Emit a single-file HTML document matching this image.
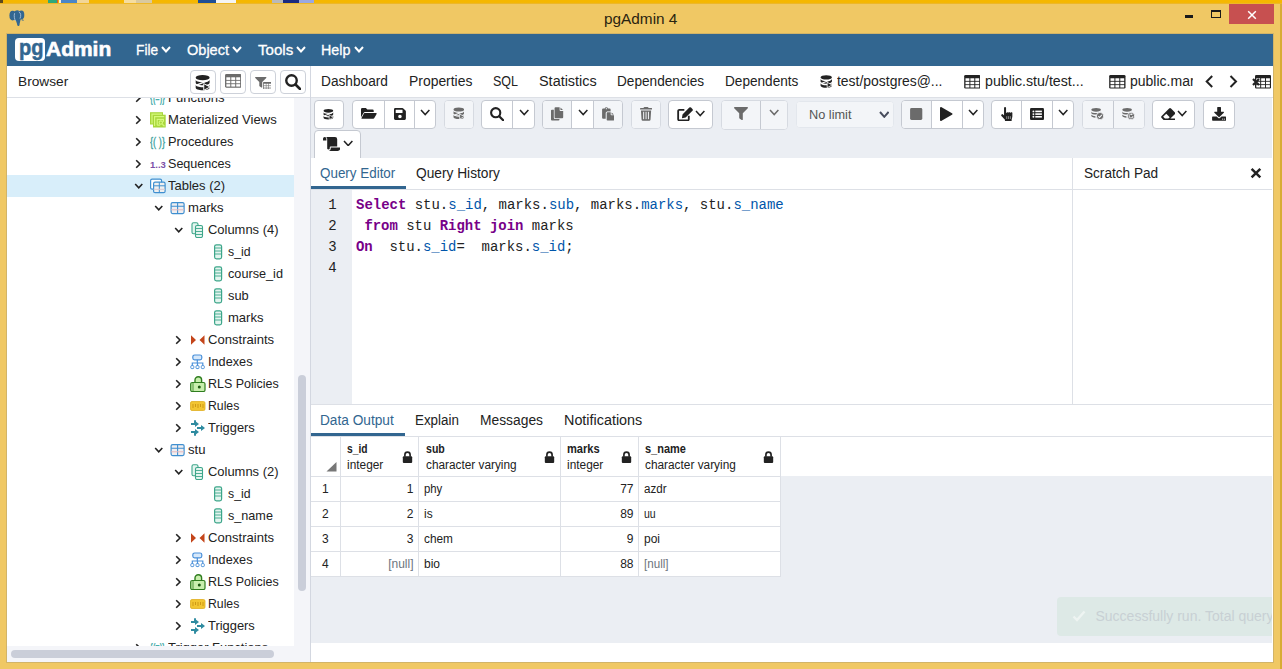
<!DOCTYPE html>
<html><head><meta charset="utf-8"><title>pgAdmin 4</title>
<style>
*{box-sizing:border-box;margin:0;padding:0}
html,body{width:1282px;height:669px;overflow:hidden}
body{background:#F0C864;font-family:"Liberation Sans",Arial,sans-serif;font-size:14px;color:#222;position:relative}
div,span,svg{position:absolute}
span{white-space:nowrap}
.f{transform-origin:0 0}
#topstrip{left:0;top:0;width:1282px;height:4px;background:linear-gradient(#F5B700 0,#F5B700 60%,#E9B73A 100%)}
#app{left:7px;top:34px;width:1266px;height:628px;background:#fff}
#menubar{left:7px;top:34px;width:1266px;height:32px;background:#326690}
.menu{color:#fff;font-size:15px;line-height:20px;-webkit-text-stroke:0.3px #fff}
.tab{font-size:14px;line-height:20px;color:#222}
.tr{line-height:22px;height:22px;font-size:13px;color:#222}
.btn{height:29px;top:100px;background:#fff;border:1px solid #DDE0E6;border-radius:4px}
.btn.dis{background:#F1F3F6}
.btn i{position:absolute;top:0;width:1px;height:27px;background:#C5C9D1}
.sb{width:26px;height:24px;top:70px;background:#fff;border:1px solid #CDD1D9;border-radius:4px}
.code{font-family:"Liberation Mono","DejaVu Sans Mono",monospace;font-size:14px;line-height:21px;color:#222;white-space:pre}
.kw{position:static;color:#708;font-weight:bold}
.pr{position:static;color:#05a}
.ln{font-family:"Liberation Mono","DejaVu Sans Mono",monospace;font-size:14px;line-height:21px;color:#222}
.gh{font-size:12px;line-height:16px;color:#222}
.gc{font-size:12px;line-height:25px;color:#222}
</style></head><body>
<div id="topstrip"></div>
<div style="left:0px;top:0;width:3.0px;height:3px;background:#5E4A1E"></div><div style="left:47.6px;top:0;width:9.0px;height:3px;background:#2FA87A"></div><div style="left:56.6px;top:0;width:1.9px;height:3px;background:#D2553C"></div><div style="left:58.5px;top:0;width:2.0px;height:3px;background:#F4EDE4"></div><div style="left:60.5px;top:0;width:16.2px;height:3px;background:#4A86C8"></div><div style="left:76.7px;top:0;width:12.1px;height:3px;background:#F2D698"></div><div style="left:124px;top:0;width:12.0px;height:3px;background:#F5DDA0"></div><div style="left:136px;top:0;width:16.0px;height:3px;background:#D9C9A0"></div><div style="left:197.7px;top:0;width:18.0px;height:3px;background:#1F4E96"></div><div style="left:215.7px;top:0;width:20.6px;height:3px;background:#F4F4F4"></div><div style="left:271.5px;top:0;width:11.5px;height:3px;background:#B9B9B9"></div><div style="left:283px;top:0;width:15.6px;height:3px;background:#1A2A80"></div><div style="left:298.6px;top:0;width:15.4px;height:3px;background:#9AA8E0"></div>
<svg style="left:9.4px;top:9.9px" width="15.6" height="16" viewBox="0 0 15.6 16"><g fill="#336791"><ellipse cx="3.6" cy="5.6" rx="3.2" ry="4.8"/><ellipse cx="8.2" cy="5.6" rx="4.4" ry="5.4"/><ellipse cx="12.4" cy="5" rx="2.9" ry="4.4"/><path d="M6.4 8C6.8 11 8 13 8.300 15.200C8.500 16.300 10.400 16.200 10.500 15C10.700 12.500 11.500 10.500 12 8z"/><path d="M13 9.300l1.800 .6-.4 .8-1.800-.5z"/></g><path d="M5.600 3.200C4.800 6 5.400 9 6.600 11M9.800 1.800C12 2.800 12.200 6 11 8.600" stroke="#B7CDE6" stroke-width=".8" fill="none"/></svg>
<span class="f" style="left:603.7px;top:8.5px;transform:scaleX(0.9904);font-size:15.5px;line-height:20px;color:#2a2410">pgAdmin 4</span><div style="left:1185px;top:15px;width:8px;height:3px;background:#1a1a1a"></div>
<div style="left:1211px;top:10px;width:10px;height:8px;border:1px solid #1a1a1a;border-top-width:2px"></div>
<div style="left:1229px;top:4px;width:45px;height:20px;background:#C75050"></div>
<svg style="left:1247px;top:9.5px" width="10" height="10" viewBox="0 0 10 10"><path d="M1.2 1.2L8.8 8.8M8.8 1.2L1.2 8.8" stroke="#fff" stroke-width="1.5" fill="none"/></svg>
<div id="app"></div>
<div id="menubar"></div>
<div style="left:15px;top:38px;width:30px;height:23px;background:#fff;border-radius:4px"></div>
<span class="f" style="left:18.5px;top:36px;transform:scaleX(0.9111);font-size:22px;line-height:24px;font-weight:bold;color:#326690;-webkit-text-stroke:0.5px #326690">pg</span><span class="f" style="left:45.5px;top:37px;transform:scaleX(1.0479);font-size:20px;line-height:24px;font-weight:bold;color:#fff;-webkit-text-stroke:0.6px #fff">Admin</span><span class="f menu" style="left:135.8px;top:40px;transform:scaleX(0.9143);">File</span><svg style="left:161.2px;top:46px" width="10" height="7" viewBox="-1 -1 10 7"><path d="M0 0L4.0 4.5L8 0" stroke="#fff" stroke-width="2" fill="none"/></svg>
<span class="f menu" style="left:186.9px;top:40px;transform:scaleX(0.9686);">Object</span><svg style="left:232.2px;top:46px" width="10" height="7" viewBox="-1 -1 10 7"><path d="M0 0L4.0 4.5L8 0" stroke="#fff" stroke-width="2" fill="none"/></svg>
<span class="f menu" style="left:257.5px;top:40px;transform:scaleX(1.0077);">Tools</span><svg style="left:296.1px;top:46px" width="10" height="7" viewBox="-1 -1 10 7"><path d="M0 0L4.0 4.5L8 0" stroke="#fff" stroke-width="2" fill="none"/></svg>
<span class="f menu" style="left:321.4px;top:40px;transform:scaleX(0.9527);">Help</span><svg style="left:354.3px;top:46px" width="10" height="7" viewBox="-1 -1 10 7"><path d="M0 0L4.0 4.5L8 0" stroke="#fff" stroke-width="2" fill="none"/></svg>
<span class="f" style="left:17.6px;top:72px;transform:scaleX(1.0527);font-size:13px;line-height:20px">Browser</span><div class="sb" style="left:190px"></div>
<div class="sb" style="left:220px"></div>
<div class="sb" style="left:250px"></div>
<div class="sb" style="left:280px"></div>
<svg style="left:195px;top:75px" width="15.3" height="15.6" viewBox="0 0 11 11.2"><g fill="#222"><ellipse cx="5.5" cy="1.9" rx="5" ry="1.9"/><path d="M.5 3.4c0 1 2.2 1.8 5 1.8s5-.8 5-1.8v2.2c0 1-2.2 1.8-5 1.8s-5-.8-5-1.8z"/><path d="M.5 7c0 1 2.2 1.8 5 1.8s5-.8 5-1.8v2.2c0 1-2.2 1.8-5 1.8s-5-.8-5-1.8z"/></g><path d="M1 7.3L9 4.2" stroke="#fff" stroke-width="1.1"/><path d="M6.3 6.2L10.8 8.6L6.3 11z" fill="#222" stroke="#fff" stroke-width=".7"/></svg><svg style="left:224.6px;top:74.2px" width="16.5" height="13.7" viewBox="0 0 15 12.5"><rect x="0" y="0" width="15" height="12.500" rx="1.200" fill="#6b6b6b"/><g fill="#fff"><rect x="1.200" y="3" width="3.600" height="2.400"/><rect x="5.700" y="3" width="3.600" height="2.400"/><rect x="10.200" y="3" width="3.600" height="2.400"/><rect x="1.200" y="6.200" width="3.600" height="2.300"/><rect x="5.700" y="6.200" width="3.600" height="2.300"/><rect x="10.200" y="6.200" width="3.600" height="2.300"/><rect x="1.200" y="9.300" width="3.600" height="2.200"/><rect x="5.700" y="9.300" width="3.600" height="2.200"/><rect x="10.200" y="9.300" width="3.600" height="2.200"/></g></svg><svg style="left:255px;top:77px" width="11.5" height="10.5" viewBox="0 0 14 13"><path fill="#6b6b6b" d="M.7 0H13.3A.7 .7 0 0 1 13.8 1.2L8.8 6.2V12.4A.7 .7 0 0 1 7.7 12.9L5.5 11.4A.7 .7 0 0 1 5.2 10.8V6.2L.2 1.2A.7 .7 0 0 1 .7 0z"/></svg><svg style="left:262.5px;top:81.8px" width="8.8" height="7.2" viewBox="0 0 15 12.5"><rect x="0" y="0" width="15" height="12.500" rx="1.200" fill="#6b6b6b"/><g fill="#fff"><rect x="1.200" y="3" width="3.600" height="2.400"/><rect x="5.700" y="3" width="3.600" height="2.400"/><rect x="10.200" y="3" width="3.600" height="2.400"/><rect x="1.200" y="6.200" width="3.600" height="2.300"/><rect x="5.700" y="6.200" width="3.600" height="2.300"/><rect x="10.200" y="6.200" width="3.600" height="2.300"/><rect x="1.200" y="9.300" width="3.600" height="2.200"/><rect x="5.700" y="9.300" width="3.600" height="2.200"/><rect x="10.200" y="9.300" width="3.600" height="2.200"/></g></svg><svg style="left:284.9px;top:74.1px" width="16.2" height="16.2" viewBox="0 0 14.2 14.2"><circle cx="5.7" cy="5.7" r="4.6" fill="none" stroke="#222" stroke-width="2.1"/><path d="M9.2 9.2L13.2 13.2" stroke="#222" stroke-width="2.3000000000000003" stroke-linecap="round"/></svg>
<div style="left:7px;top:97px;width:1266px;height:1px;background:#DDE0E6"></div>
<div style="left:310px;top:66px;width:1px;height:596px;background:#D3D7E0"></div>
<div id="tree" style="left:0;top:98px;width:294px;height:548px;overflow:hidden">
<svg style="left:135px;top:-5px" width="7" height="10" viewBox="-1 -1 7 10"><path d="M0.200 0.200L4 4L0.200 7.800" stroke="#222" stroke-width="1.600" fill="none"/></svg><svg style="left:150px;top:-8px" width="16" height="16" viewBox="0 0 16 16"><text x="0" y="12" font-size="12.500" font-weight="bold" fill="#4AAEAB" textLength="15" lengthAdjust="spacingAndGlyphs" font-family="Liberation Sans,sans-serif">{(=)}</text></svg><span class="f tr" style="left:168.4px;top:-11px;transform:scaleX(1.0040);">Functions</span>
<svg style="left:135px;top:17px" width="7" height="10" viewBox="-1 -1 7 10"><path d="M0.200 0.200L4 4L0.200 7.800" stroke="#222" stroke-width="1.600" fill="none"/></svg><svg style="left:150px;top:14px" width="16" height="16" viewBox="0 0 16 16"><rect x="0" y="0.200" width="13" height="12.300" fill="#A8D63C"/><rect x="3" y="2.700" width="12.700" height="12.800" fill="#A8D63C"/><path d="M2 11.500V2.200h10M4.600 14V4.700h9.600M7.200 13.200V7.300h6.200v2.500M7.200 13.200h3" stroke="#D6FA7C" stroke-width="1.200" fill="none"/><circle cx="10.800" cy="10.600" r="1.700" stroke="#D6FA7C" stroke-width="1.100" fill="none"/><path d="M12.300 12.200l2.200 2" stroke="#D6FA7C" stroke-width="1.200"/></svg><span class="f tr" style="left:168.4px;top:11px;transform:scaleX(1.0052);">Materialized Views</span>
<svg style="left:135px;top:39px" width="7" height="10" viewBox="-1 -1 7 10"><path d="M0.200 0.200L4 4L0.200 7.800" stroke="#222" stroke-width="1.600" fill="none"/></svg><svg style="left:150px;top:36px" width="16" height="16" viewBox="0 0 16 16"><text x="0" y="12" font-size="12.500" fill="#3FA3A0" stroke="#3FA3A0" stroke-width=".35" textLength="15" lengthAdjust="spacingAndGlyphs" font-family="Liberation Sans,sans-serif">{( )}</text></svg><span class="f tr" style="left:168.4px;top:33px;transform:scaleX(0.9852);">Procedures</span>
<svg style="left:135px;top:61px" width="7" height="10" viewBox="-1 -1 7 10"><path d="M0.200 0.200L4 4L0.200 7.800" stroke="#222" stroke-width="1.600" fill="none"/></svg><svg style="left:150px;top:58px" width="16" height="16" viewBox="0 0 16 16"><text x="0" y="12" font-size="9.5" font-weight="bold" fill="#7B4FA8" font-family="Liberation Sans,sans-serif">1..3</text></svg><span class="f tr" style="left:168.4px;top:55px;transform:scaleX(0.9668);">Sequences</span>
<div style="left:7px;top:77px;width:287px;height:22px;background:#D8EEFA"></div><svg style="left:133.7px;top:84.7px" width="10" height="7" viewBox="-1 -1 10 7"><path d="M0.200 0L3.750 3.800L7.300 0" stroke="#222" stroke-width="1.600" fill="none"/></svg><svg style="left:150px;top:80px" width="16" height="16" viewBox="0 0 16 16"><rect x="0.6" y="1.2" width="11" height="10" rx="1.5" fill="#fff" stroke="#3F8FD0" stroke-width="1.2"/><rect x="3.6" y="4.2" width="11.5" height="10.5" rx="1.5" fill="#F0F0F0" stroke="#3F8FD0" stroke-width="1.2"/><path d="M3.6 7.8h11.5M9.3 4.2v10.5" stroke="#3F8FD0" stroke-width="1"/><path d="M3.6 11.3h11.5" stroke="#D8C8D0" stroke-width="1"/></svg><span class="f tr" style="left:168.4px;top:77px;transform:scaleX(1.0004);">Tables (2)</span>
<svg style="left:153.7px;top:106.7px" width="10" height="7" viewBox="-1 -1 10 7"><path d="M0.200 0L3.750 3.800L7.300 0" stroke="#222" stroke-width="1.600" fill="none"/></svg><svg style="left:170px;top:102px" width="16" height="16" viewBox="0 0 16 16"><rect x="1.1" y="2.6" width="13" height="11" rx="1.5" fill="#F0EEF0" stroke="#3F8FD0" stroke-width="1.2"/><path d="M1.1 6.2h13M7.6 2.6v11" stroke="#3F8FD0" stroke-width="1.1"/><path d="M1.1 9.8h13" stroke="#E4B8BE" stroke-width="1"/></svg><span class="f tr" style="left:188.4px;top:99px;transform:scaleX(1.0059);">marks</span>
<svg style="left:173.7px;top:128.7px" width="10" height="7" viewBox="-1 -1 10 7"><path d="M0.200 0L3.750 3.800L7.300 0" stroke="#222" stroke-width="1.600" fill="none"/></svg><svg style="left:190px;top:124px" width="16" height="16" viewBox="0 0 16 16"><rect x="2" y="0.8" width="6" height="11" rx="1.5" fill="#E4F5EF" stroke="#3DA68A" stroke-width="1.1"/><rect x="5.5" y="3.5" width="7" height="12" rx="1.5" fill="#E4F5EF" stroke="#3DA68A" stroke-width="1.1"/><path d="M5.5 6.5h7M5.5 9.5h7M5.5 12.5h7" stroke="#3DA68A" stroke-width="0.9"/></svg><span class="f tr" style="left:208.4px;top:121px;transform:scaleX(0.9958);">Columns (4)</span>
<svg style="left:212.6px;top:146px" width="16" height="16" viewBox="0 0 16 16"><rect x="1.6" y="0.8" width="7" height="14" rx="1.8" fill="#E4F5EF" stroke="#3DA68A" stroke-width="1.2"/><path d="M1.6 4h7M1.6 7h7M1.6 10h7" stroke="#3DA68A" stroke-width="0.9"/></svg><span class="f tr" style="left:228.4px;top:143px;transform:scaleX(0.9430);">s_id</span>
<svg style="left:212.6px;top:168px" width="16" height="16" viewBox="0 0 16 16"><rect x="1.6" y="0.8" width="7" height="14" rx="1.8" fill="#E4F5EF" stroke="#3DA68A" stroke-width="1.2"/><path d="M1.6 4h7M1.6 7h7M1.6 10h7" stroke="#3DA68A" stroke-width="0.9"/></svg><span class="f tr" style="left:228.4px;top:165px;transform:scaleX(0.9756);">course_id</span>
<svg style="left:212.6px;top:190px" width="16" height="16" viewBox="0 0 16 16"><rect x="1.6" y="0.8" width="7" height="14" rx="1.8" fill="#E4F5EF" stroke="#3DA68A" stroke-width="1.2"/><path d="M1.6 4h7M1.6 7h7M1.6 10h7" stroke="#3DA68A" stroke-width="0.9"/></svg><span class="f tr" style="left:228.4px;top:187px;transform:scaleX(0.9872);">sub</span>
<svg style="left:212.6px;top:212px" width="16" height="16" viewBox="0 0 16 16"><rect x="1.6" y="0.8" width="7" height="14" rx="1.8" fill="#E4F5EF" stroke="#3DA68A" stroke-width="1.2"/><path d="M1.6 4h7M1.6 7h7M1.6 10h7" stroke="#3DA68A" stroke-width="0.9"/></svg><span class="f tr" style="left:228.4px;top:209px;transform:scaleX(1.0031);">marks</span>
<svg style="left:175px;top:237px" width="7" height="10" viewBox="-1 -1 7 10"><path d="M0.200 0.200L4 4L0.200 7.800" stroke="#222" stroke-width="1.600" fill="none"/></svg><svg style="left:190px;top:234px" width="16" height="16" viewBox="0 0 16 16"><path d="M1 3.200L6 8L1 12.800zM14.500 3.200L9.500 8L14.500 12.800z" fill="#C4451A"/></svg><span class="f tr" style="left:208.4px;top:231px;transform:scaleX(1.0053);">Constraints</span>
<svg style="left:175px;top:259px" width="7" height="10" viewBox="-1 -1 7 10"><path d="M0.200 0.200L4 4L0.200 7.800" stroke="#222" stroke-width="1.600" fill="none"/></svg><svg style="left:190px;top:256px" width="16" height="16" viewBox="0 0 16 16"><rect x="2.800" y="1" width="9" height="4.800" rx="1.800" fill="#D6E8FA" stroke="#4A90D9" stroke-width="1.200"/><path d="M7.300 5.800v3.200M2.300 12V9h10.500V12M7.500 9V12" stroke="#4A90D9" stroke-width="1.200" fill="none"/><rect x="0.800" y="11.600" width="3" height="3" rx="0.900" fill="#fff" stroke="#4A90D9" stroke-width="1"/><rect x="6" y="11.600" width="3" height="3" rx="0.900" fill="#fff" stroke="#4A90D9" stroke-width="1"/><rect x="11.300" y="11.600" width="3" height="3" rx="0.900" fill="#fff" stroke="#4A90D9" stroke-width="1"/></svg><span class="f tr" style="left:208.4px;top:253px;transform:scaleX(0.9770);">Indexes</span>
<svg style="left:175px;top:281px" width="7" height="10" viewBox="-1 -1 7 10"><path d="M0.200 0.200L4 4L0.200 7.800" stroke="#222" stroke-width="1.600" fill="none"/></svg><svg style="left:190px;top:278px" width="16" height="16" viewBox="0 0 16 16"><path d="M5 7.500V4a3.300 3.300 0 0 1 6.600 0V7.500" stroke="#2F7D1F" stroke-width="1.400" fill="#C9EFAE"/><rect x="0.700" y="6.500" width="14.300" height="9" rx="1.500" fill="#C9EFAE" stroke="#2F7D1F" stroke-width="1.200"/><path d="M3 6.500v9" stroke="#2F7D1F" stroke-width="0.800"/><circle cx="9.300" cy="11" r="1.500" fill="#1E5A12"/></svg><span class="f tr" style="left:208.4px;top:275px;transform:scaleX(0.9593);">RLS Policies</span>
<svg style="left:175px;top:303px" width="7" height="10" viewBox="-1 -1 7 10"><path d="M0.200 0.200L4 4L0.200 7.800" stroke="#222" stroke-width="1.600" fill="none"/></svg><svg style="left:190px;top:300px" width="16" height="16" viewBox="0 0 16 16"><rect x="0.5" y="3.5" width="14.5" height="9" rx="1.5" fill="#F2C531" stroke="#E0AE20" stroke-width="0.8"/><path d="M3 6v4M5.5 6v3M8 6v4M10.5 6v3M13 6v4" stroke="#C99412" stroke-width="0.9"/></svg><span class="f tr" style="left:208.4px;top:297px;transform:scaleX(0.9414);">Rules</span>
<svg style="left:175px;top:325px" width="7" height="10" viewBox="-1 -1 7 10"><path d="M0.200 0.200L4 4L0.200 7.800" stroke="#222" stroke-width="1.600" fill="none"/></svg><svg style="left:190px;top:322px" width="16" height="16" viewBox="0 0 16 16"><path d="M5 0.300v3.500M5 12.200v3.500M1 4h5M1 12h5M7 8h5" stroke="#2E8BA0" stroke-width="1.900" fill="none"/><path d="M5 1L9 4L5 7zM5 9L9 12L5 15zM11 5L15 8L11 11z" fill="#2E8BA0"/></svg><span class="f tr" style="left:208.4px;top:319px;transform:scaleX(0.9915);">Triggers</span>
<svg style="left:153.7px;top:348.7px" width="10" height="7" viewBox="-1 -1 10 7"><path d="M0.200 0L3.750 3.800L7.300 0" stroke="#222" stroke-width="1.600" fill="none"/></svg><svg style="left:170px;top:344px" width="16" height="16" viewBox="0 0 16 16"><rect x="1.1" y="2.6" width="13" height="11" rx="1.5" fill="#F0EEF0" stroke="#3F8FD0" stroke-width="1.2"/><path d="M1.1 6.2h13M7.6 2.6v11" stroke="#3F8FD0" stroke-width="1.1"/><path d="M1.1 9.8h13" stroke="#E4B8BE" stroke-width="1"/></svg><span class="f tr" style="left:188.4px;top:341px;transform:scaleX(1.0090);">stu</span>
<svg style="left:173.7px;top:370.7px" width="10" height="7" viewBox="-1 -1 10 7"><path d="M0.200 0L3.750 3.800L7.300 0" stroke="#222" stroke-width="1.600" fill="none"/></svg><svg style="left:190px;top:366px" width="16" height="16" viewBox="0 0 16 16"><rect x="2" y="0.8" width="6" height="11" rx="1.5" fill="#E4F5EF" stroke="#3DA68A" stroke-width="1.1"/><rect x="5.5" y="3.5" width="7" height="12" rx="1.5" fill="#E4F5EF" stroke="#3DA68A" stroke-width="1.1"/><path d="M5.5 6.5h7M5.5 9.5h7M5.5 12.5h7" stroke="#3DA68A" stroke-width="0.9"/></svg><span class="f tr" style="left:208.4px;top:363px;transform:scaleX(0.9958);">Columns (2)</span>
<svg style="left:212.6px;top:388px" width="16" height="16" viewBox="0 0 16 16"><rect x="1.6" y="0.8" width="7" height="14" rx="1.8" fill="#E4F5EF" stroke="#3DA68A" stroke-width="1.2"/><path d="M1.6 4h7M1.6 7h7M1.6 10h7" stroke="#3DA68A" stroke-width="0.9"/></svg><span class="f tr" style="left:228.4px;top:385px;transform:scaleX(0.9430);">s_id</span>
<svg style="left:212.6px;top:410px" width="16" height="16" viewBox="0 0 16 16"><rect x="1.6" y="0.8" width="7" height="14" rx="1.8" fill="#E4F5EF" stroke="#3DA68A" stroke-width="1.2"/><path d="M1.6 4h7M1.6 7h7M1.6 10h7" stroke="#3DA68A" stroke-width="0.9"/></svg><span class="f tr" style="left:228.4px;top:407px;transform:scaleX(0.9708);">s_name</span>
<svg style="left:175px;top:435px" width="7" height="10" viewBox="-1 -1 7 10"><path d="M0.200 0.200L4 4L0.200 7.800" stroke="#222" stroke-width="1.600" fill="none"/></svg><svg style="left:190px;top:432px" width="16" height="16" viewBox="0 0 16 16"><path d="M1 3.200L6 8L1 12.800zM14.500 3.200L9.500 8L14.500 12.800z" fill="#C4451A"/></svg><span class="f tr" style="left:208.4px;top:429px;transform:scaleX(1.0053);">Constraints</span>
<svg style="left:175px;top:457px" width="7" height="10" viewBox="-1 -1 7 10"><path d="M0.200 0.200L4 4L0.200 7.800" stroke="#222" stroke-width="1.600" fill="none"/></svg><svg style="left:190px;top:454px" width="16" height="16" viewBox="0 0 16 16"><rect x="2.800" y="1" width="9" height="4.800" rx="1.800" fill="#D6E8FA" stroke="#4A90D9" stroke-width="1.200"/><path d="M7.300 5.800v3.200M2.300 12V9h10.500V12M7.500 9V12" stroke="#4A90D9" stroke-width="1.200" fill="none"/><rect x="0.800" y="11.600" width="3" height="3" rx="0.900" fill="#fff" stroke="#4A90D9" stroke-width="1"/><rect x="6" y="11.600" width="3" height="3" rx="0.900" fill="#fff" stroke="#4A90D9" stroke-width="1"/><rect x="11.300" y="11.600" width="3" height="3" rx="0.900" fill="#fff" stroke="#4A90D9" stroke-width="1"/></svg><span class="f tr" style="left:208.4px;top:451px;transform:scaleX(0.9770);">Indexes</span>
<svg style="left:175px;top:479px" width="7" height="10" viewBox="-1 -1 7 10"><path d="M0.200 0.200L4 4L0.200 7.800" stroke="#222" stroke-width="1.600" fill="none"/></svg><svg style="left:190px;top:476px" width="16" height="16" viewBox="0 0 16 16"><path d="M5 7.500V4a3.300 3.300 0 0 1 6.600 0V7.500" stroke="#2F7D1F" stroke-width="1.400" fill="#C9EFAE"/><rect x="0.700" y="6.500" width="14.300" height="9" rx="1.500" fill="#C9EFAE" stroke="#2F7D1F" stroke-width="1.200"/><path d="M3 6.500v9" stroke="#2F7D1F" stroke-width="0.800"/><circle cx="9.300" cy="11" r="1.500" fill="#1E5A12"/></svg><span class="f tr" style="left:208.4px;top:473px;transform:scaleX(0.9593);">RLS Policies</span>
<svg style="left:175px;top:501px" width="7" height="10" viewBox="-1 -1 7 10"><path d="M0.200 0.200L4 4L0.200 7.800" stroke="#222" stroke-width="1.600" fill="none"/></svg><svg style="left:190px;top:498px" width="16" height="16" viewBox="0 0 16 16"><rect x="0.5" y="3.5" width="14.5" height="9" rx="1.5" fill="#F2C531" stroke="#E0AE20" stroke-width="0.8"/><path d="M3 6v4M5.5 6v3M8 6v4M10.5 6v3M13 6v4" stroke="#C99412" stroke-width="0.9"/></svg><span class="f tr" style="left:208.4px;top:495px;transform:scaleX(0.9414);">Rules</span>
<svg style="left:175px;top:523px" width="7" height="10" viewBox="-1 -1 7 10"><path d="M0.200 0.200L4 4L0.200 7.800" stroke="#222" stroke-width="1.600" fill="none"/></svg><svg style="left:190px;top:520px" width="16" height="16" viewBox="0 0 16 16"><path d="M5 0.300v3.500M5 12.200v3.500M1 4h5M1 12h5M7 8h5" stroke="#2E8BA0" stroke-width="1.900" fill="none"/><path d="M5 1L9 4L5 7zM5 9L9 12L5 15zM11 5L15 8L11 11z" fill="#2E8BA0"/></svg><span class="f tr" style="left:208.4px;top:517px;transform:scaleX(0.9915);">Triggers</span>
<svg style="left:135px;top:545px" width="7" height="10" viewBox="-1 -1 7 10"><path d="M0.200 0.200L4 4L0.200 7.800" stroke="#222" stroke-width="1.600" fill="none"/></svg><svg style="left:150px;top:542px" width="16" height="16" viewBox="0 0 16 16"><text x="0" y="12" font-size="12.500" font-weight="bold" fill="#4AAEAB" textLength="15" lengthAdjust="spacingAndGlyphs" font-family="Liberation Sans,sans-serif">{(=)}</text></svg><span class="f tr" style="left:168.4px;top:539px;transform:scaleX(0.9943);">Trigger Functions</span>
</div>
<div style="left:294px;top:98px;width:16px;height:564px;background:#F4F5F9"></div>
<div style="left:298px;top:375px;width:8px;height:216px;background:#CACED9;border-radius:4px"></div>
<div style="left:7px;top:646px;width:303px;height:16px;background:#F4F5F9"></div>
<div style="left:11px;top:650px;width:263px;height:8px;background:#CACED9;border-radius:4px"></div>
<span class="f tab" style="left:321.2px;top:71px;transform:scaleX(0.9781);">Dashboard</span><span class="f tab" style="left:409px;top:71px;transform:scaleX(0.9935);">Properties</span><span class="f tab" style="left:493px;top:71px;transform:scaleX(0.8924);">SQL</span><span class="f tab" style="left:538.6px;top:71px;transform:scaleX(1.0301);">Statistics</span><span class="f tab" style="left:617px;top:71px;transform:scaleX(0.9730);">Dependencies</span><span class="f tab" style="left:725.1px;top:71px;transform:scaleX(0.9720);">Dependents</span><span class="f tab" style="left:837.2px;top:71px;transform:scaleX(0.9948);">test/postgres@...</span><span class="f tab" style="left:984.9px;top:71px;transform:scaleX(1.0136);">public.stu/test...</span><svg style="left:819.5px;top:75.4px" width="12.5" height="13.2" viewBox="0 0 11 11.2"><g fill="#222"><ellipse cx="5.5" cy="1.9" rx="5" ry="1.9"/><path d="M.5 3.4c0 1 2.2 1.8 5 1.8s5-.8 5-1.8v2.2c0 1-2.2 1.8-5 1.8s-5-.8-5-1.8z"/><path d="M.5 7c0 1 2.2 1.8 5 1.8s5-.8 5-1.8v2.2c0 1-2.2 1.8-5 1.8s-5-.8-5-1.8z"/></g><path d="M1 7.3L9 4.2" stroke="#fff" stroke-width="1.1"/><path d="M6.3 6.2L10.8 8.6L6.3 11z" fill="#222" stroke="#fff" stroke-width=".7"/></svg><svg style="left:963.8px;top:75px" width="16.7" height="13.6" viewBox="0 0 15 12.5"><rect x="0" y="0" width="15" height="12.500" rx="1.200" fill="#222"/><g fill="#fff"><rect x="1.200" y="3" width="3.600" height="2.400"/><rect x="5.700" y="3" width="3.600" height="2.400"/><rect x="10.200" y="3" width="3.600" height="2.400"/><rect x="1.200" y="6.200" width="3.600" height="2.300"/><rect x="5.700" y="6.200" width="3.600" height="2.300"/><rect x="10.200" y="6.200" width="3.600" height="2.300"/><rect x="1.200" y="9.300" width="3.600" height="2.200"/><rect x="5.700" y="9.300" width="3.600" height="2.200"/><rect x="10.200" y="9.300" width="3.600" height="2.200"/></g></svg><svg style="left:1109.3px;top:75px" width="16.7" height="13.6" viewBox="0 0 15 12.5"><rect x="0" y="0" width="15" height="12.500" rx="1.200" fill="#222"/><g fill="#fff"><rect x="1.200" y="3" width="3.600" height="2.400"/><rect x="5.700" y="3" width="3.600" height="2.400"/><rect x="10.200" y="3" width="3.600" height="2.400"/><rect x="1.200" y="6.200" width="3.600" height="2.300"/><rect x="5.700" y="6.200" width="3.600" height="2.300"/><rect x="10.200" y="6.200" width="3.600" height="2.300"/><rect x="1.200" y="9.300" width="3.600" height="2.200"/><rect x="5.700" y="9.300" width="3.600" height="2.200"/><rect x="10.200" y="9.300" width="3.600" height="2.200"/></g></svg><svg style="left:1204.6px;top:75.1px" width="9" height="13" viewBox="-1 -1 9 13"><path d="M6.2 0L0.700 5.500L6.200 11" stroke="#222" stroke-width="2" fill="none"/></svg><svg style="left:1228.9px;top:75.1px" width="9" height="13" viewBox="-1 -1 9 13"><path d="M0.500 0L6 5.500L0.500 11" stroke="#222" stroke-width="2" fill="none"/></svg><svg style="left:1254.5px;top:75px" width="16.2" height="13.6" viewBox="0 0 15 12.5"><rect x="0" y="0" width="15" height="12.500" rx="1.200" fill="#222"/><g fill="#fff"><rect x="1.200" y="3" width="3.600" height="2.400"/><rect x="5.700" y="3" width="3.600" height="2.400"/><rect x="10.200" y="3" width="3.600" height="2.400"/><rect x="1.200" y="6.200" width="3.600" height="2.300"/><rect x="5.700" y="6.200" width="3.600" height="2.300"/><rect x="10.200" y="6.200" width="3.600" height="2.300"/><rect x="1.200" y="9.300" width="3.600" height="2.200"/><rect x="5.700" y="9.300" width="3.600" height="2.200"/><rect x="10.200" y="9.300" width="3.600" height="2.200"/></g></svg><svg style="left:1252.3px;top:77.5px" width="8" height="8" viewBox="0 0 8 8"><path d="M1 1L7 7M7 1L1 7" stroke="#222" stroke-width="2.200" fill="none"/></svg>
<div style="left:1130px;top:66px;width:63px;height:31px;overflow:hidden"><span class="f tab" style="left:0px;top:5px;">public.marks/test</span></div>
<div style="left:311px;top:98px;width:961px;height:60px;background:#EBEEF3"></div>
<div class="btn" style="left:314px;width:30px;top:100px;height:29px;border-color:#C5C9D1;overflow:hidden"></div>
<svg style="left:323px;top:109.4px" width="10.8" height="10.8" viewBox="0 0 11 11.2"><g fill="#222"><ellipse cx="5.5" cy="1.9" rx="5" ry="1.9"/><path d="M.5 3.4c0 1 2.2 1.8 5 1.8s5-.8 5-1.8v2.2c0 1-2.2 1.8-5 1.8s-5-.8-5-1.8z"/><path d="M.5 7c0 1 2.2 1.8 5 1.8s5-.8 5-1.8v2.2c0 1-2.2 1.8-5 1.8s-5-.8-5-1.8z"/></g><path d="M1 7.3L9 4.2" stroke="#fff" stroke-width="1.1"/><path d="M6.3 6.2L10.8 8.6L6.3 11z" fill="#222" stroke="#fff" stroke-width=".7"/></svg><div class="btn" style="left:352px;width:84px;top:100px;height:29px;border-color:#C5C9D1;overflow:hidden"><i style="left:31px;height:29px"></i><i style="left:61px;height:29px"></i></div>
<svg style="left:360.9px;top:108.1px" width="15.8" height="10.8" viewBox="0 0 15.9 10.8"><g fill="#222"><path d="M0 9.2V1.2A1.2 1.2 0 0 1 1.2 0H4.9L6.4 1.5H11.6A1.2 1.2 0 0 1 12.8 2.7V4H4.1A1.9 1.9 0 0 0 2.5 5z"/><path d="M3.6 5.1H15.2A.6 .6 0 0 1 15.7 6L13.4 10A1.3 1.3 0 0 1 12.3 10.7H.9A.4 .4 0 0 1 .5 10.1L2.8 5.7A1 1 0 0 1 3.6 5.1z"/></g></svg><svg style="left:394px;top:107.8px" width="11.9" height="11.9" viewBox="0 0 12 12"><path fill="#222" fill-rule="evenodd" d="M11.6 2.6L9.4.4A1.3 1.3 0 0 0 8.5 0H1.3A1.3 1.3 0 0 0 0 1.3v9.4A1.3 1.3 0 0 0 1.3 12h9.4a1.3 1.3 0 0 0 1.3-1.3V3.5a1.3 1.3 0 0 0-.4-.9zM6 10.4a1.8 1.8 0 1 1 0-3.6 1.8 1.8 0 0 1 0 3.6zM8.6 2v2.8a.3 .3 0 0 1-.3 .3H2a.3 .3 0 0 1-.3-.3V2a.3 .3 0 0 1 .3-.3h6.3a.3 .3 0 0 1 .3 .3z"/></svg><svg style="left:420px;top:109px" width="10.4" height="6.6" viewBox="-1 -1 10.4 6.6"><path d="M0 0L4.2 4.6L8.4 0" stroke="#222" stroke-width="1.5" fill="none"/></svg><div class="btn" style="left:444px;width:30px;top:100px;height:29px;border-color:#D6DAE1;overflow:hidden"><div style="left:-1px;top:0;width:30px;height:29px;background:#F3F5F8"></div></div>
<svg style="left:452.7px;top:107.3px" width="11.6" height="12.8" viewBox="0 0 11 11.2"><g fill="#6b6b6b"><ellipse cx="5.5" cy="1.9" rx="5" ry="1.9"/><path d="M.5 3.4c0 1 2.2 1.8 5 1.8s5-.8 5-1.8v2.2c0 1-2.2 1.8-5 1.8s-5-.8-5-1.8z"/><path d="M.5 7c0 1 2.2 1.8 5 1.8s5-.8 5-1.8v2.2c0 1-2.2 1.8-5 1.8s-5-.8-5-1.8z"/></g><path d="M1 7.3L9 4.2" stroke="#F3F5F8" stroke-width="1.1"/><path d="M6.3 6.2L10.8 8.6L6.3 11z" fill="#6b6b6b" stroke="#F3F5F8" stroke-width=".7"/></svg><div class="btn" style="left:481px;width:54px;top:100px;height:29px;border-color:#C5C9D1;overflow:hidden"><i style="left:30px;height:29px"></i></div>
<svg style="left:490.2px;top:106.9px" width="14.2" height="14.2" viewBox="0 0 14.2 14.2"><circle cx="5.7" cy="5.7" r="4.6" fill="none" stroke="#222" stroke-width="2.1"/><path d="M9.2 9.2L13.2 13.2" stroke="#222" stroke-width="2.3000000000000003" stroke-linecap="round"/></svg><svg style="left:518.6px;top:109px" width="10.4" height="6.6" viewBox="-1 -1 10.4 6.6"><path d="M0 0L4.2 4.6L8.4 0" stroke="#222" stroke-width="1.5" fill="none"/></svg><div class="btn" style="left:542px;width:81px;top:100px;height:29px;border-color:#C5C9D1;overflow:hidden"><div style="left:-1px;top:0;width:29px;height:29px;background:#F3F5F8"></div><div style="left:50px;top:0;width:30px;height:29px;background:#F3F5F8"></div><i style="left:28px;height:29px"></i><i style="left:50px;height:29px"></i></div>
<svg style="left:551.4px;top:107px" width="12.2" height="13.8" viewBox="0 0 13 14"><path fill="#6b6b6b" d="M0 3.5A1 1 0 0 1 1 2.5H3V11.2A1.3 1.3 0 0 0 4.3 12.5H9V13A1 1 0 0 1 8 14H1A1 1 0 0 1 0 13z"/><path fill="#6b6b6b" stroke="#F3F5F8" stroke-width=".9" paint-order="stroke" d="M4.8 0H9.2V3A.8 .8 0 0 0 10 3.8H13V10.6A1 1 0 0 1 12 11.6H4.8A1 1 0 0 1 3.8 10.6V1A1 1 0 0 1 4.8 0zM10.1 0.2L12.8 2.9H10.1z"/></svg><svg style="left:577.8px;top:109px" width="10.4" height="6.6" viewBox="-1 -1 10.4 6.6"><path d="M0 0L4.2 4.6L8.4 0" stroke="#222" stroke-width="1.5" fill="none"/></svg><svg style="left:601.9px;top:107.1px" width="12.2" height="13.5" viewBox="0 0 12 13.5"><path fill="#6b6b6b" d="M0 2.6A1 1 0 0 1 1 1.6H2.6A1.7 1.7 0 0 1 5.9 1.6H7.5A1 1 0 0 1 8.5 2.6V4.4H5.2A1.6 1.6 0 0 0 3.6 6V11.8H1A1 1 0 0 1 0 10.8zM4.25 1.1a.6 .6 0 1 0 0 1.2 .6 .6 0 0 0 0-1.2z" fill-rule="evenodd"/><path fill="#6b6b6b" stroke="#F3F5F8" stroke-width=".8" paint-order="stroke" d="M5.4 5.2H8.6V7.6A.7 .7 0 0 0 9.3 8.3H12V12.7A.8 .8 0 0 1 11.2 13.5H5.4A.8 .8 0 0 1 4.6 12.7V6A.8 .8 0 0 1 5.4 5.2zM9.5 5.4L11.8 7.5H9.5z"/></svg><div class="btn" style="left:631px;width:30px;top:100px;height:29px;border-color:#D6DAE1;overflow:hidden"><div style="left:-1px;top:0;width:30px;height:29px;background:#F3F5F8"></div></div>
<svg style="left:639.7px;top:107.1px" width="12.1" height="13.7" viewBox="0 0 12 13.7"><path fill="#6b6b6b" d="M0 1.4A.5 .5 0 0 1 .5 .9H3.4L3.9 .3A.8 .8 0 0 1 4.5 0H7.5A.8 .8 0 0 1 8.1 .3L8.6 .9H11.5A.5 .5 0 0 1 12 1.4V2.5H0zM.9 3.4H11.1L10.5 12.5A1.3 1.3 0 0 1 9.2 13.7H2.8A1.3 1.3 0 0 1 1.5 12.5z"/><path d="M3.6 5.2V11.8M6 5.2V11.8M8.4 5.2V11.8" stroke="#F3F5F8" stroke-width="1" stroke-linecap="round"/></svg><div class="btn" style="left:668px;width:45px;top:100px;height:29px;border-color:#C5C9D1;overflow:hidden"></div>
<svg style="left:677px;top:106.7px" width="16.3" height="14.2" viewBox="0 0 15.6 14"><path d="M11.4 8.6V12A1.2 1.2 0 0 1 10.2 13.2H2.1A1.2 1.2 0 0 1 .9 12V4A1.2 1.2 0 0 1 2.1 2.8H7" fill="none" stroke="#222" stroke-width="1.8"/><path fill="#222" d="M5.2 7.3L11.9 .6A1.2 1.2 0 0 1 13.6 .6L15 2A1.2 1.2 0 0 1 15 3.7L8.3 10.4L4.6 11z"/></svg><svg style="left:695px;top:110.2px" width="10.4" height="6.6" viewBox="-1 -1 10.4 6.6"><path d="M0 0L4.2 4.6L8.4 0" stroke="#222" stroke-width="1.5" fill="none"/></svg><div class="btn" style="left:721px;width:67px;top:99.5px;height:30px;border-color:#D6DAE1;overflow:hidden"><div style="left:-1px;top:0;width:39px;height:30px;background:#F3F5F8"></div><div style="left:38px;top:0;width:28px;height:30px;background:#F3F5F8"></div><i style="left:38px;height:30px"></i></div>
<svg style="left:734px;top:106.9px" width="14" height="13.2" viewBox="0 0 14 13.2"><path fill="#6b6b6b" d="M.7 0H13.3A.7 .7 0 0 1 13.8 1.2L8.8 6.2V12.4A.7 .7 0 0 1 7.7 12.9L5.5 11.4A.7 .7 0 0 1 5.2 10.8V6.2L.2 1.2A.7 .7 0 0 1 .7 0z"/></svg><svg style="left:769px;top:109px" width="10.4" height="6.6" viewBox="-1 -1 10.4 6.6"><path d="M0 0L4.2 4.6L8.4 0" stroke="#6b6b6b" stroke-width="1.5" fill="none"/></svg><div class="btn" style="left:796px;width:98px;top:100.5px;height:27.5px;border-color:#E3E7ED;overflow:hidden"><div style="left:-1px;top:0;width:98px;height:27.5px;background:#F3F5F8"></div></div>
<svg style="left:878.6px;top:110.8px" width="10.6" height="6.8" viewBox="-1 -1 10.6 6.8"><path d="M0 0L4.3 4.8L8.6 0" stroke="#474c5c" stroke-width="2" fill="none"/></svg><div class="btn" style="left:901px;width:83px;top:100px;height:29px;border-color:#C5C9D1;overflow:hidden"><div style="left:-1px;top:0;width:30px;height:29px;background:#F3F5F8"></div><i style="left:29px;height:29px"></i><i style="left:60px;height:29px"></i></div>
<svg style="left:910.2px;top:107.8px" width="12.4" height="12" viewBox="0 0 12.2 12"><rect x="0" y="0" width="12.2" height="12" rx="1.4" fill="#6b6b6b"/></svg><svg style="left:940.4px;top:106.9px" width="12.6" height="14" viewBox="0 0 12.6 14"><path fill="#222" d="M1.6 .2L12 6.2A.9 .9 0 0 1 12 7.8L1.6 13.8A1 1 0 0 1 0 12.9V1.1A1 1 0 0 1 1.6 .2z"/></svg><svg style="left:967.8px;top:109px" width="10.4" height="6.6" viewBox="-1 -1 10.4 6.6"><path d="M0 0L4.2 4.6L8.4 0" stroke="#222" stroke-width="1.5" fill="none"/></svg><div class="btn" style="left:991px;width:83px;top:100px;height:29px;border-color:#C5C9D1;overflow:hidden"><i style="left:29px;height:29px"></i><i style="left:60px;height:29px"></i></div>
<svg style="left:1000.5px;top:106.9px" width="12.3" height="14" viewBox="0 0 12 14"><path fill="#222" d="M2.900 1A1 1 0 0 1 4.900 1V6.100H5.300A1 1 0 0 1 7.200 5.700A1 1 0 0 1 9.100 6A1 1 0 0 1 11.200 6.700V9.800L10.500 12.400V14H3.800V12.800L.3 8.900A1.050 1.050 0 0 1 1.900 7.500L2.900 8.500z"/><path d="M5.600 9.200V12M7.400 9.200V12M9.200 9.200V12" stroke="#fff" stroke-width=".7" opacity=".7"/></svg><svg style="left:1030px;top:107.6px" width="14" height="12.2" viewBox="0 0 14 12"><rect x="0" y="0" width="14" height="12" rx="1.300" fill="#222"/><g fill="#fff"><circle cx="3.400" cy="3.300" r=".95"/><rect x="5.300" y="2.500" width="6.600" height="1.600"/><circle cx="3.400" cy="6" r=".95"/><rect x="5.300" y="5.200" width="6.600" height="1.600"/><circle cx="3.400" cy="8.700" r=".95"/><rect x="5.300" y="7.900" width="6.600" height="1.600"/></g></svg><svg style="left:1057.8px;top:109px" width="10.4" height="6.6" viewBox="-1 -1 10.4 6.6"><path d="M0 0L4.2 4.6L8.4 0" stroke="#222" stroke-width="1.5" fill="none"/></svg><div class="btn" style="left:1082px;width:63px;top:100px;height:29px;border-color:#D6DAE1;overflow:hidden"><div style="left:-1px;top:0;width:31px;height:29px;background:#F3F5F8"></div><div style="left:30px;top:0;width:32px;height:29px;background:#F3F5F8"></div><i style="left:30px;height:29px"></i></div>
<svg style="left:1091px;top:108px" width="13" height="11.8" viewBox="0 0 13.3 12.3"><g fill="#6b6b6b"><ellipse cx="5.2" cy="1.9" rx="5" ry="1.9"/><path d="M.2 3.6c0 1 2.2 1.7 5 1.7s5-.7 5-1.7v1.6c0 1-2.2 1.7-5 1.7s-5-.7-5-1.7z"/><path d="M.2 6.8c0 .9 1.8 1.6 4.3 1.7v1.6C2 10 .2 9.300 .2 8.400z"/><circle cx="9.300" cy="8.400" r="3.800" stroke="#F3F5F8" stroke-width=".9"/></g><path d="M7.500 8.500L8.800 9.800L11.200 7.200" stroke="#F3F5F8" stroke-width="1.1" fill="none"/></svg><svg style="left:1122px;top:108px" width="13" height="11.8" viewBox="0 0 13.3 12.3"><g fill="#6b6b6b"><ellipse cx="5.2" cy="1.9" rx="5" ry="1.9"/><path d="M.2 3.6c0 1 2.2 1.7 5 1.7s5-.7 5-1.7v1.6c0 1-2.2 1.7-5 1.7s-5-.7-5-1.7z"/><path d="M.2 6.8c0 .9 1.8 1.6 4.3 1.7v1.6C2 10 .2 9.300 .2 8.400z"/><circle cx="9.300" cy="8.400" r="3.800" stroke="#F3F5F8" stroke-width=".9"/></g><path d="M11.300 8.400a2 2 0 1 1-1-1.700" stroke="#F3F5F8" stroke-width="1" fill="none"/><path d="M9.500 5.600l1.700 1.100-1.800 .9z" fill="#F3F5F8"/></svg><div class="btn" style="left:1152px;width:43px;top:100px;height:29px;border-color:#C5C9D1;overflow:hidden"></div>
<svg style="left:1161px;top:107.7px" width="14.2" height="12.3" viewBox="0 0 14 12.2"><path fill="#222" fill-rule="evenodd" d="M13.600 6.200A1.300 1.300 0 0 0 13.600 4.300L9.900 .6A1.300 1.300 0 0 0 8 .6L.6 8A1.300 1.300 0 0 0 .6 9.900L2.500 11.800A1.300 1.300 0 0 0 3.400 12.200H13.700A.3 .3 0 0 0 14 11.900V10.800A.3 .3 0 0 0 13.700 10.500H9.300zM5.200 5.700L8.600 9.100L7.200 10.500H3.900L2.100 8.800z"/></svg><svg style="left:1177.2px;top:110.2px" width="10.4" height="6.6" viewBox="-1 -1 10.4 6.6"><path d="M0 0L4.2 4.6L8.4 0" stroke="#222" stroke-width="1.5" fill="none"/></svg><div class="btn" style="left:1203px;width:32px;top:100px;height:29px;border-color:#C5C9D1;overflow:hidden"></div>
<svg style="left:1212px;top:107px" width="14.2" height="13.7" viewBox="0 0 14 13.7"><path fill="#222" d="M5.700 0H8.300A.6 .6 0 0 1 8.900 .6V4.800H11.300A.5 .5 0 0 1 11.700 5.700L7.400 10A.6 .6 0 0 1 6.600 10L2.300 5.700A.5 .5 0 0 1 2.700 4.800H5.100V.6A.6 .6 0 0 1 5.700 0z"/><path fill="#222" d="M.7 9.400H4.600L5.900 10.700A1.600 1.600 0 0 0 8.100 10.700L9.400 9.400H13.300A.7 .7 0 0 1 14 10.100V13A.7 .7 0 0 1 13.300 13.700H.7A.7 .7 0 0 1 0 13V10.100A.7 .7 0 0 1 .7 9.400z"/><circle cx="10.600" cy="12.100" r=".55" fill="#fff"/><circle cx="12.300" cy="12.100" r=".55" fill="#fff"/></svg><div class="btn" style="left:314px;width:47px;top:130px;height:32px;border-color:#C5C9D1;overflow:hidden"></div>
<svg style="left:323px;top:136.8px" width="17.2" height="13.9" viewBox="0 0 17.2 13.9"><path fill="#222" d="M0 1.700A1.700 1.700 0 0 1 3.400 1.700V3.400H0zM2.600 0H12A2.200 2.200 0 0 1 14.200 2.200V9.500H7.600A.8 .8 0 0 0 6.800 10.300V11.600A1.400 1.400 0 0 1 4.200 11.800V1.700A1.700 1.700 0 0 0 2.600 0z"/><path fill="#222" d="M7.700 10.400H17.200V11.300A2.600 2.600 0 0 1 14.600 13.900H5.700A2.200 2.200 0 0 0 7.700 11.700z"/></svg><svg style="left:343px;top:139.8px" width="10.4" height="6.6" viewBox="-1 -1 10.4 6.6"><path d="M0 0L4.2 4.6L8.4 0" stroke="#222" stroke-width="1.5" fill="none"/></svg><span class="f" style="left:808.8px;top:105px;transform:scaleX(0.9805);font-size:13px;line-height:20px;color:#555">No limit</span>
<div style="left:311px;top:158px;width:961px;height:32px;background:#fff;border-bottom:1px solid #DDE0E6"></div>
<span class="f tab" style="left:320.3px;top:163px;transform:scaleX(0.9581);color:#326690">Query Editor</span><span class="f tab" style="left:416.2px;top:163px;transform:scaleX(0.9804);">Query History</span><div style="left:311px;top:186px;width:95px;height:3px;background:#326690"></div>
<div style="left:311px;top:190px;width:41px;height:214px;background:#EBEEF3"></div>
<span class="ln" style="left:328.200px;top:195px">1</span><span class="ln" style="left:328.200px;top:216px">2</span><span class="ln" style="left:328.200px;top:237px">3</span><span class="ln" style="left:328.200px;top:257.5px">4</span>
<span class="f code" style="left:356.3px;top:195px;transform:scaleX(0.9980);"><span class="kw">Select</span> stu.<span class="pr">s_id</span>, marks.<span class="pr">sub</span>, marks.<span class="pr">marks</span>, stu.<span class="pr">s_name</span></span><span class="f code" style="left:356.3px;top:216px;transform:scaleX(0.9964);"> <span class="kw">from</span> stu <span class="kw">Right</span> <span class="kw">join</span> marks</span><span class="f code" style="left:356.3px;top:237px;transform:scaleX(0.9964);"><span class="kw">On</span>  stu.<span class="pr">s_id</span>=  marks.<span class="pr">s_id</span>;</span>
<div style="left:1072px;top:158px;width:1px;height:246px;background:#DDE0E6"></div>
<span class="f tab" style="left:1083.7px;top:163px;transform:scaleX(0.9716);">Scratch Pad</span><svg style="left:1250px;top:167px" width="12" height="12" viewBox="0 0 12 12"><path d="M1.600 1.900L10.300 10.300M10.300 1.900L1.600 10.300" stroke="#222" stroke-width="2.500" fill="none"/></svg>
<div style="left:311px;top:404px;width:961px;height:1px;background:#DDE0E6"></div>
<span class="f tab" style="left:320.4px;top:410px;transform:scaleX(0.9762);color:#326690">Data Output</span><span class="f tab" style="left:415.4px;top:410px;transform:scaleX(0.9560);color:#222">Explain</span><span class="f tab" style="left:480.1px;top:410px;transform:scaleX(0.9873);color:#222">Messages</span><span class="f tab" style="left:564.2px;top:410px;transform:scaleX(1.0267);color:#222">Notifications</span><div style="left:311px;top:433px;width:94px;height:3px;background:#326690"></div>
<div style="left:311px;top:436px;width:961px;height:1px;background:#DDE0E6"></div>
<div style="left:311px;top:476px;width:961px;height:167px;background:#EBEEF3"></div>
<div style="left:311px;top:437px;width:470px;height:140px;background:#fff"></div>
<div style="left:340px;top:437px;width:1px;height:139px;background:#DDE0E6"></div><div style="left:418px;top:437px;width:1px;height:139px;background:#DDE0E6"></div><div style="left:560px;top:437px;width:1px;height:139px;background:#DDE0E6"></div><div style="left:638px;top:437px;width:1px;height:139px;background:#DDE0E6"></div><div style="left:780px;top:437px;width:1px;height:139px;background:#DDE0E6"></div><div style="left:311px;top:476px;width:470px;height:1px;background:#DDE0E6"></div><div style="left:311px;top:501px;width:470px;height:1px;background:#DDE0E6"></div><div style="left:311px;top:526px;width:470px;height:1px;background:#DDE0E6"></div><div style="left:311px;top:551px;width:470px;height:1px;background:#DDE0E6"></div><div style="left:311px;top:576px;width:470px;height:1px;background:#DDE0E6"></div>
<span class="f gh" style="left:347.4px;top:441px;transform:scaleX(0.8536);font-weight:bold">s_id</span><span class="f gh" style="left:347.4px;top:457px;transform:scaleX(0.9890);">integer</span><svg style="left:401.5px;top:450.500px" width="11" height="12.500" viewBox="0 0 10 12"><path d="M2.5 5.5V3.5a2.5 2.5 0 0 1 5 0V5.5" stroke="#222" stroke-width="1.6" fill="none"/><rect x="0.5" y="5" width="9" height="6.5" rx="1" fill="#222"/></svg><span class="f gh" style="left:425.5px;top:441px;transform:scaleX(0.8808);font-weight:bold">sub</span><span class="f gh" style="left:425.5px;top:457px;transform:scaleX(0.9843);">character varying</span><svg style="left:543.5px;top:450.500px" width="11" height="12.500" viewBox="0 0 10 12"><path d="M2.5 5.5V3.5a2.5 2.5 0 0 1 5 0V5.5" stroke="#222" stroke-width="1.6" fill="none"/><rect x="0.5" y="5" width="9" height="6.5" rx="1" fill="#222"/></svg><span class="f gh" style="left:567.2px;top:441px;transform:scaleX(0.9244);font-weight:bold">marks</span><span class="f gh" style="left:567.2px;top:457px;transform:scaleX(0.9890);">integer</span><svg style="left:621.3px;top:450.500px" width="11" height="12.500" viewBox="0 0 10 12"><path d="M2.5 5.5V3.5a2.5 2.5 0 0 1 5 0V5.5" stroke="#222" stroke-width="1.6" fill="none"/><rect x="0.5" y="5" width="9" height="6.5" rx="1" fill="#222"/></svg><span class="f gh" style="left:645.2px;top:441px;transform:scaleX(0.9149);font-weight:bold">s_name</span><span class="f gh" style="left:645.2px;top:457px;transform:scaleX(0.9865);">character varying</span><svg style="left:763.2px;top:450.500px" width="11" height="12.500" viewBox="0 0 10 12"><path d="M2.5 5.5V3.5a2.5 2.5 0 0 1 5 0V5.5" stroke="#222" stroke-width="1.6" fill="none"/><rect x="0.5" y="5" width="9" height="6.5" rx="1" fill="#222"/></svg><svg style="left:326px;top:462px" width="11" height="10" viewBox="0 0 11 10"><path d="M10.5 0V9.5H0.5z" fill="#777"/></svg>
<span class="gc" style="left:322px;top:477px">1</span><span class="gc" style="left:341px;width:72.5px;text-align:right;top:477px;">1</span><span class="f gc" style="left:424.4px;top:477px;transform:scaleX(0.9453);">phy</span><span class="gc" style="left:561px;width:72.5px;text-align:right;top:477px">77</span><span class="f gc" style="left:644.4px;top:477px;transform:scaleX(0.9681);">azdr</span>
<span class="gc" style="left:322px;top:502px">2</span><span class="gc" style="left:341px;width:72.5px;text-align:right;top:502px;">2</span><span class="f gc" style="left:424.4px;top:502px;transform:scaleX(0.9917);">is</span><span class="gc" style="left:561px;width:72.5px;text-align:right;top:502px">89</span><span class="f gc" style="left:644.4px;top:502px;transform:scaleX(0.8758);">uu</span>
<span class="gc" style="left:322px;top:527px">3</span><span class="gc" style="left:341px;width:72.5px;text-align:right;top:527px;">3</span><span class="f gc" style="left:424.4px;top:527px;transform:scaleX(0.9849);">chem</span><span class="gc" style="left:561px;width:72.5px;text-align:right;top:527px">9</span><span class="f gc" style="left:644.4px;top:527px;transform:scaleX(0.9990);">poi</span>
<span class="gc" style="left:322px;top:552px">4</span><span class="gc" style="left:341px;width:72.5px;text-align:right;top:552px;color:#6c757d">[null]</span><span class="f gc" style="left:424.4px;top:552px;transform:scaleX(0.9990);">bio</span><span class="gc" style="left:561px;width:72.5px;text-align:right;top:552px">88</span><span class="f gc" style="left:644.4px;top:552px;transform:scaleX(0.9701);color:#6c757d">[null]</span>
<div style="left:1056.500px;top:597px;width:215.500px;height:38.500px;background:#DDE9E6;border-radius:4px 0 0 4px;overflow:hidden"><span style="left:39px;top:9px;font-size:14px;line-height:20px;color:#C8D0D4">Successfully run. Total query runtime: 69 msec.</span><svg style="left:15px;top:12px" width="14" height="14" viewBox="0 0 14 14"><path d="M1.500 7.500L5 11L12.500 2.500" stroke="#EEF4F2" stroke-width="2.400" fill="none"/></svg></div>
<div style="left:6px;top:33px;width:1268px;height:630px;border:1px solid #D2B468;pointer-events:none"></div>
<div style="left:1280px;top:4px;width:2px;height:665px;background:#D8AC34"></div>
</body></html>
